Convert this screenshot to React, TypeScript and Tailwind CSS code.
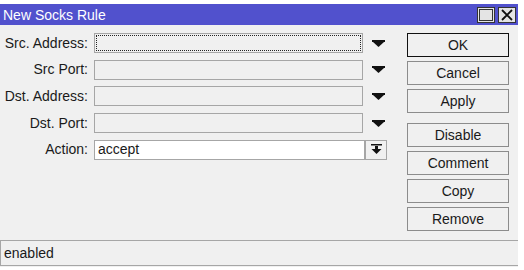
const fields = [
  { label: 'Src. Address:', focus: true },
  { label: 'Src Port:' },
  { label: 'Dst. Address:' },
  { label: 'Dst. Port:' },
]

const buttons = ['OK', 'Cancel', 'Apply', 'Disable', 'Comment', 'Copy', 'Remove']

function DropArrow() {
  return (
    <svg width="13" height="7" viewBox="0 0 13 7">
      <rect x="0" y="0" width="13" height="2" fill="#111" />
      <polygon points="1,2 12,2 6.5,7" fill="#111" />
    </svg>
  )
}

function ActionIcon() {
  return (
    <svg width="11" height="11" viewBox="0 0 11 11">
      <rect x="0" y="0" width="11" height="1.5" fill="#111" />
      <rect x="4" y="2" width="3" height="4" fill="#111" />
      <polygon points="0.5,5 10.5,5 5.5,10" fill="#111" />
    </svg>
  )
}

export default function App() {
  return (
    <div className="w-[524px] h-[270px] bg-white pt-1 font-['Liberation_Sans',Arial,sans-serif] text-[14px] text-[#1a1a1a]">
      <div className="w-[518px] h-[263px] flex flex-col">
        {/* Title bar */}
        <div className="h-[21px] bg-[#5151cd] flex items-center justify-between pl-[3px] pr-[2px]">
          <span className="text-white text-[14px] leading-none">New Socks Rule</span>
          <div className="flex gap-[3px]">
            <div className="w-[18px] h-[16px] bg-[#e4e4e4] border border-[#333] flex items-center justify-center">
              <div className="w-[14px] h-[12px] border border-[#333]" />
            </div>
            <div className="w-[18px] h-[16px] bg-[#e4e4e4] border border-[#333] flex items-center justify-center">
              <svg width="12" height="12" viewBox="0 0 12 12">
                <path d="M1 1 L11 11 M11 1 L1 11" stroke="#111" strokeWidth="1.8" />
              </svg>
            </div>
          </div>
        </div>

        {/* Body */}
        <div className="flex-1 bg-[#f0f0f0] flex flex-col">
          <div className="flex pt-2">
            {/* Form */}
            <div className="flex flex-col gap-[6.7px]">
              {fields.map((f) => (
                <div key={f.label} className="flex items-center h-[20px]">
                  <span className="w-[89px] text-right pr-px">{f.label}</span>
                  <div className="ml-[5px] w-[269px] h-[20px] border border-[#a6a6a6] bg-[#f0f0f0] p-px">
                    {f.focus && <div className="w-full h-full border border-dotted border-[#222]" />}
                  </div>
                  <div className="w-[26px] flex justify-center pl-[4px]">
                    <DropArrow />
                  </div>
                </div>
              ))}
              <div className="flex items-center h-[20px]">
                <span className="w-[89px] text-right pr-px">Action:</span>
                <div className="ml-[5px] w-[271px] h-[20px] border border-[#a6a6a6] bg-white flex items-center pl-[3px]">
                  accept
                </div>
                <div className="w-[22px] h-[20px] border border-[#a6a6a6] flex items-center justify-center">
                  <ActionIcon />
                </div>
              </div>
            </div>

            {/* Buttons */}
            <div className="ml-[18px] flex flex-col gap-[4px]">
              {buttons.map((b) => (
                <div
                  key={b}
                  className={`w-[102px] h-[24px] flex items-center justify-center bg-[#f0f0f0] border ${
                    b === 'OK' ? 'border-[#111]' : 'border-[#8c8c8c]'
                  } ${b === 'Disable' ? 'mt-[6px]' : ''}`}
                >
                  {b}
                </div>
              ))}
            </div>
          </div>

          {/* Status bar */}
          <div className="mt-auto mb-px h-[26px] border-y border-l border-[#a6a6a6] flex items-center pl-[3px]">
            enabled
          </div>
        </div>
      </div>
    </div>
  )
}
